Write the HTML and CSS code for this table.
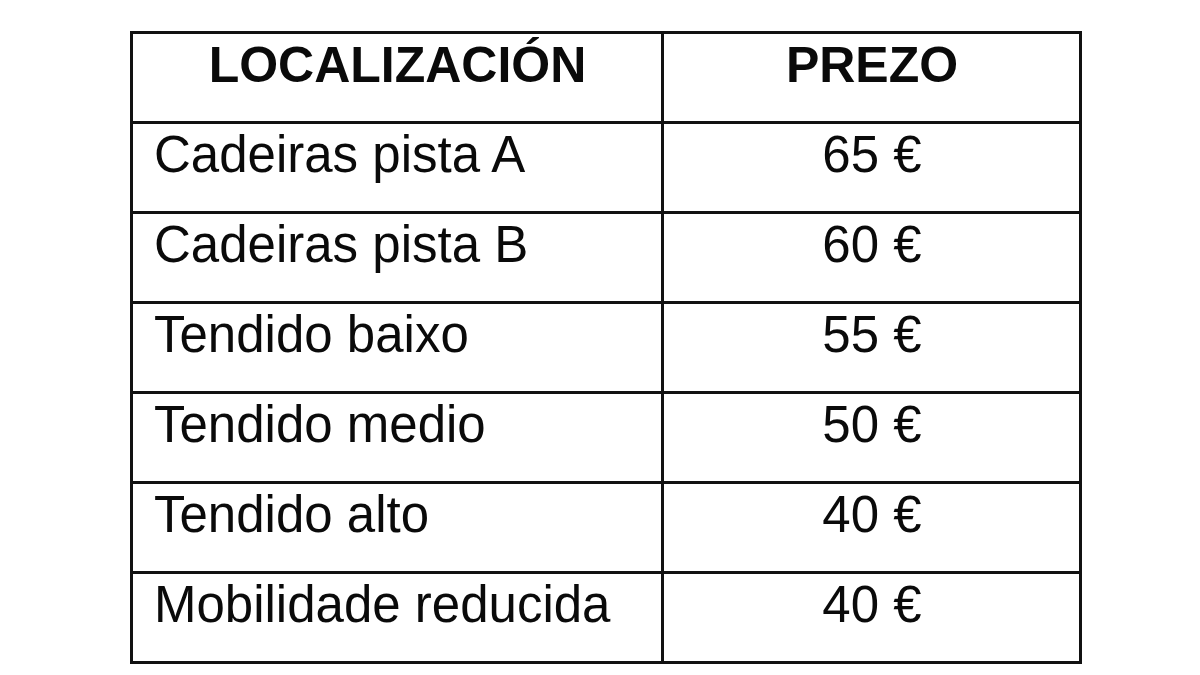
FILE: index.html
```html
<!DOCTYPE html>
<html lang="gl">
<head>
<meta charset="utf-8">
<title>Prezos</title>
<link rel="stylesheet" href="styles.css">
</head>
<body>
<div class="page">
  <table class="prices">
    <colgroup>
      <col class="col-loc">
      <col class="col-price">
    </colgroup>
    <thead>
      <tr><th>LOCALIZACIÓN</th><th>PREZO</th></tr>
    </thead>
    <tbody>
      <tr><td class="loc">Cadeiras pista A</td><td class="price">65 €</td></tr>
      <tr><td class="loc">Cadeiras pista B</td><td class="price">60 €</td></tr>
      <tr><td class="loc">Tendido baixo</td><td class="price">55 €</td></tr>
      <tr><td class="loc">Tendido medio</td><td class="price">50 €</td></tr>
      <tr><td class="loc">Tendido alto</td><td class="price">40 €</td></tr>
      <tr><td class="loc">Mobilidade reducida</td><td class="price">40 €</td></tr>
    </tbody>
  </table>
</div>
</body>
</html>
```
FILE: styles.css
```css
html, body {
  margin: 0;
  padding: 0;
  background: #ffffff;
}

.page {
  padding: 31px 0 0 130px;
  font-family: "Liberation Sans", Arial, sans-serif;
  color: #0a0a0a;
}

.prices {
  border-collapse: collapse;
  table-layout: fixed;
  width: 949px;
}

.col-loc {
  width: 531px;
}

.col-price {
  width: 418px;
}

.prices th,
.prices td {
  border: 3px solid #111111;
  font-size: 51px;
  line-height: 57px;
  height: 57px;
  padding: 2px 20px 28px 21px;
  vertical-align: top;
  white-space: nowrap;
}

.prices th {
  font-size: 50px;
  font-weight: bold;
  text-align: center;
  height: 56px;
  padding-top: 3px;
  padding-bottom: 27px;
}

.prices td.loc {
  text-align: left;
}

.prices td.price {
  text-align: center;
}
```
